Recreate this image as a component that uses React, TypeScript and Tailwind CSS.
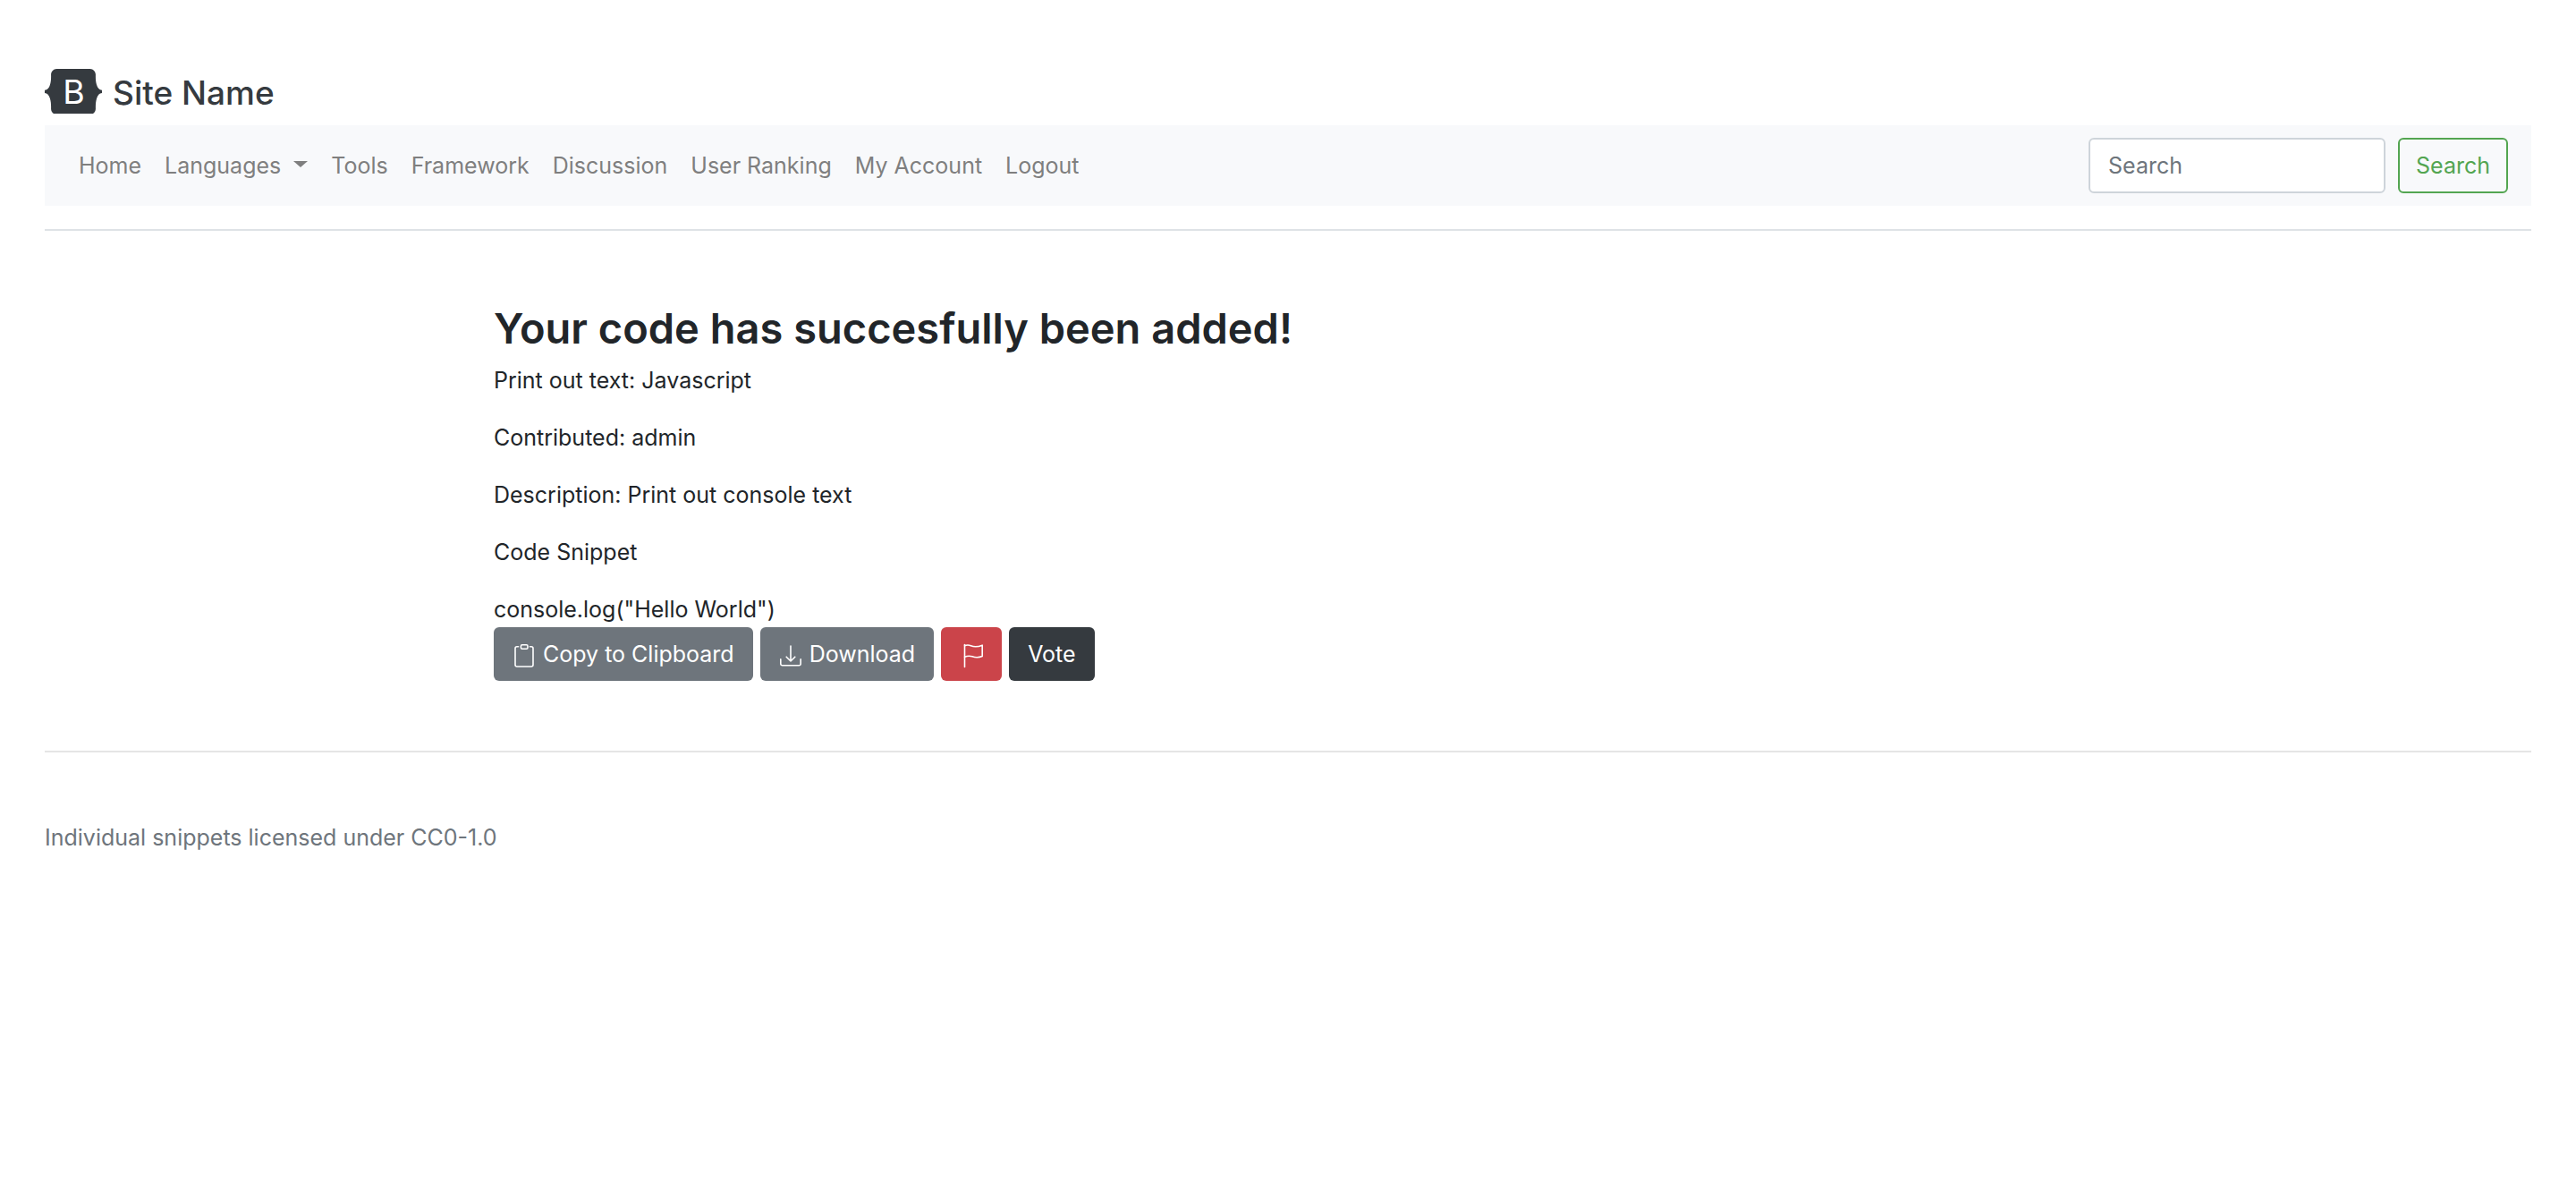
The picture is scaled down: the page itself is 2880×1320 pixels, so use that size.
const navItems = ["Tools", "Framework", "Discussion", "User Ranking", "My Account", "Logout"];

const details = [
  "Print out text: Javascript",
  "Contributed: admin",
  "Description: Print out console text",
  "Code Snippet",
];

function Logo() {
  return (
    <svg viewBox="0 0 118 94" className="w-16 shrink-0" role="img" aria-label="Bootstrap">
      <path
        fill="currentColor"
        d="M24.509 0c-6.733 0-11.715 5.893-11.492 12.284.214 6.14-.064 14.092-2.066 20.577C8.943 39.365 5.547 43.485 0 44.014v5.972c5.547.529 8.943 4.649 10.951 11.153 2.002 6.485 2.28 14.437 2.066 20.577C12.794 88.106 17.776 94 24.51 94H93.5c6.733 0 11.714-5.893 11.491-12.284-.214-6.14.064-14.092 2.066-20.577 2.009-6.504 5.396-10.624 10.943-11.153v-5.972c-5.547-.529-8.934-4.649-10.943-11.153-2.002-6.484-2.28-14.437-2.066-20.577C105.214 5.894 100.233 0 93.5 0H24.508z"
      />
      <text x="60" y="72" textAnchor="middle" fill="#fff" fontSize="69" fontWeight="400">
        B
      </text>
    </svg>
  );
}

const iconClass = "mt-1 size-[26px] shrink-0 overflow-visible fill-none stroke-current";

function ClipboardIcon() {
  return (
    <svg viewBox="0 0 26 26" className={iconClass} strokeWidth="1.6" strokeLinecap="round" aria-hidden="true">
      <path d="M6.5 2.8H5a2 2 0 0 0-2 2V23a2 2 0 0 0 2 2h16a2 2 0 0 0 2-2V4.8a2 2 0 0 0-2-2h-1.5" />
      <rect x="9.4" y="0.8" width="7.6" height="4.4" rx="1.4" />
    </svg>
  );
}

function DownloadIcon() {
  return (
    <svg viewBox="0 0 26 26" className={iconClass} strokeWidth="1.6" strokeLinecap="round" strokeLinejoin="round" aria-hidden="true">
      <path d="M1.8 16.8V22a1.8 1.8 0 0 0 1.8 1.8h18.8a1.8 1.8 0 0 0 1.8-1.8v-5.2" />
      <path d="M13 2v17M8.2 14.2l4.8 4.8 4.8-4.8" />
    </svg>
  );
}

function FlagIcon() {
  return (
    <svg viewBox="-3 0 26 26" className={iconClass} strokeWidth="1.6" strokeLinecap="round" strokeLinejoin="round" aria-hidden="true">
      <path d="M2.5.6v24.8" />
      <path d="M2.5 1.8C5 .7 7 .8 9.5 1.8S16 3.6 22.2 1.2v12.3C17 15.6 14.5 15 11 13.8S5 13.2 2.5 14.3" />
    </svg>
  );
}

export default function App() {
  return (
    <div className="px-[50px] pt-[76px] font-['Inter','Liberation_Sans',sans-serif] text-[25px] leading-[39px] text-[#212529]">
      <header className="border-b-2 border-[#dee2e6] pb-[26px]">
        <a href="#" className="mb-3 flex h-[52px] items-center gap-3 text-[#353a3f]">
          <Logo />
          <span className="pt-1 text-[37px] font-medium leading-[48px]">Site Name</span>
        </a>
        <nav className="flex items-center justify-between bg-[#f8f9fb] py-3.5 pr-[26px] pl-[38px] text-[#7f7f7f]">
          <ul className="flex gap-[26px]">
            <li>
              <a href="#">Home</a>
            </li>
            <li>
              <a href="#" className="flex items-center gap-3.5">
                Languages
                <span className="mb-1 border-x-8 border-t-[7px] border-x-transparent border-t-current" />
              </a>
            </li>
            {navItems.map((item) => (
              <li key={item}>
                <a href="#">{item}</a>
              </li>
            ))}
          </ul>
          <form className="flex gap-3.5">
            <input
              type="search"
              aria-label="Search"
              placeholder="Search"
              className="h-[62px] w-[332px] rounded-md border-2 border-[#ced4da] bg-white px-5 placeholder:text-[#6e757c]"
            />
            <button type="button" className="h-[62px] rounded-md border-2 border-[#53a551] px-[18px] text-[#53a551]">
              Search
            </button>
          </form>
        </nav>
      </header>

      <main className="mx-auto max-w-[1776px] pt-[78px] pb-[78px]">
        <h1 className="mb-2 text-[47px] font-semibold leading-[62px]">Your code has succesfully been added!</h1>
        {details.map((line) => (
          <p key={line} className="mb-[25px]">
            {line}
          </p>
        ))}
        <p>console.log("Hello World")</p>
        <div className="flex gap-2 text-white">
          <button type="button" className="flex h-[60px] items-center gap-2 rounded-md bg-[#6e757c] px-[21px]">
            <ClipboardIcon />
            Copy to Clipboard
          </button>
          <button type="button" className="flex h-[60px] items-center gap-2 rounded-md bg-[#6e757c] px-[21px]">
            <DownloadIcon />
            Download
          </button>
          <button type="button" aria-label="Flag" className="flex h-[60px] items-center rounded-md bg-[#cb444a] px-[21px]">
            <FlagIcon />
          </button>
          <button type="button" className="h-[60px] rounded-md bg-[#353a3f] px-[21px]">
            Vote
          </button>
        </div>
      </main>

      <footer className="border-t-2 border-[#e5e5e5] pt-[76px] text-[#6e757c]">
        Individual snippets licensed under CC0-1.0
      </footer>
    </div>
  );
}
